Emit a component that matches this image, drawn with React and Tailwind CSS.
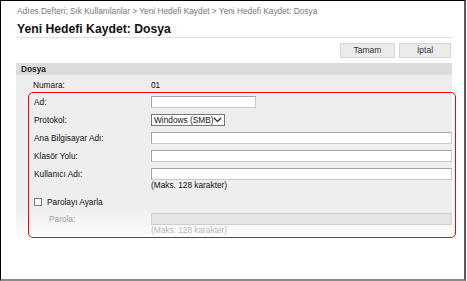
import React from "react";

const FONT = { fontFamily: '"Liberation Sans", Arial, sans-serif' };

function Field({ label, children, labelClass = "" }) {
  return (
    <div className="flex items-start">
      <div className={`w-[117px] shrink-0 h-[12px] leading-[12px] ${labelClass}`}>{label}</div>
      <div className="flex-1 flex flex-col">{children}</div>
    </div>
  );
}

function TextBox({ className = "", disabled = false }) {
  return (
    <input
      type="text"
      disabled={disabled}
      className={`h-[12px] block border outline-none ${
        disabled
          ? "bg-[#e6e6e6] border-[#d0d0d0]"
          : "bg-white border-[#a4a4a4] border-b-[#c8c8c8] border-r-[#c8c8c8]"
      } ${className}`}
    />
  );
}

export default function App() {
  return (
    <div className="w-[467px] h-[281px] bg-white overflow-hidden text-[8.3px] text-[#111]" style={FONT}>
      <div className="w-[466px] h-[281px] border-t border-l border-black border-r-2 border-r-[#5a5a5a] border-b-2 border-b-[#8a8a8a] pl-[15px] pr-[12px] pt-[5px]">
        <div className="pl-px h-[10px] leading-[10px] text-[#777]">
          Adres Defteri: Sık Kullanılanlar &gt; Yeni Hedefi Kaydet &gt; Yeni Hedefi Kaydet: Dosya
        </div>

        <h1 className="mt-[6px] pl-px h-[16px] leading-[15px] text-[12.2px] font-bold text-[#111] border-b border-[#dedede]">
          Yeni Hedefi Kaydet: Dosya
        </h1>

        <div className="mt-[5px] flex justify-end gap-[4px] pr-px">
          <button className="w-[55px] h-[15px] bg-[#ebebeb] border border-[#d6d6d6] text-[8.5px] text-[#333] leading-[13px]">
            Tamam
          </button>
          <button className="w-[52px] h-[15px] bg-[#ebebeb] border border-[#d6d6d6] text-[8.5px] text-[#333] leading-[13px]">
            İptal
          </button>
        </div>

        <section className="mt-[5px]">
          <div className="h-[12px] leading-[12px] bg-[#dcdcdc] pl-[5px] font-bold text-[#222]">Dosya</div>

          <div className="bg-gradient-to-b from-[#eeeeee] from-[80%] to-white pt-[4px] pb-[3px]">
            <div className="flex h-[12px] leading-[12px] pl-[17px]">
              <div className="w-[118px] shrink-0">Numara:</div>
              <div>01</div>
            </div>

            <div className="mt-[1px] ml-[12px] mr-[-4px] border-[1.5px] border-[#ff0000] rounded-[5px] pl-[5px] pr-[3px] pt-[3px] pb-[2px] flex flex-col">
              <Field label="Ad:">
                <TextBox className="w-[105px]" />
              </Field>

              <div className="mt-[6px]">
                <Field label="Protokol:">
                  <div className="w-[74px] h-[12px] bg-white border border-[#7a7a7a] flex items-center justify-between pl-[2px] pr-[2px] whitespace-nowrap">
                    <span className="leading-[10px] whitespace-nowrap">Windows (SMB)</span>
                    <svg className="shrink-0" width="9" height="6" viewBox="0 0 9 6">
                      <path d="M1 1 L4.5 4.5 L8 1" fill="none" stroke="#222" strokeWidth="1.2" />
                    </svg>
                  </div>
                </Field>
              </div>

              <div className="mt-[6px]">
                <Field label="Ana Bilgisayar Adı:">
                  <TextBox className="w-full" />
                </Field>
              </div>

              <div className="mt-[6px]">
                <Field label="Klasör Yolu:">
                  <TextBox className="w-full" />
                </Field>
              </div>

              <div className="mt-[6px]">
                <Field label="Kullanıcı Adı:">
                  <TextBox className="w-full" />
                  <div className="h-[10px] leading-[10px]">(Maks. 128 karakter)</div>
                </Field>
              </div>

              <div className="mt-[6px] h-[12px] flex items-center">
                <span className="w-[8px] h-[8px] border border-[#7a7a7a] bg-white"></span>
                <span className="ml-[5px] leading-[12px]">Parolayı Ayarla</span>
              </div>

              <div className="mt-[5px]">
                <Field label="Parola:" labelClass="pl-[15px] text-[#a0a0a0]">
                  <TextBox className="w-full" disabled />
                  <div className="h-[10px] leading-[10px] text-[#bdbdbd]">(Maks. 128 karakter)</div>
                </Field>
              </div>
            </div>
          </div>
        </section>
      </div>
    </div>
  );
}
